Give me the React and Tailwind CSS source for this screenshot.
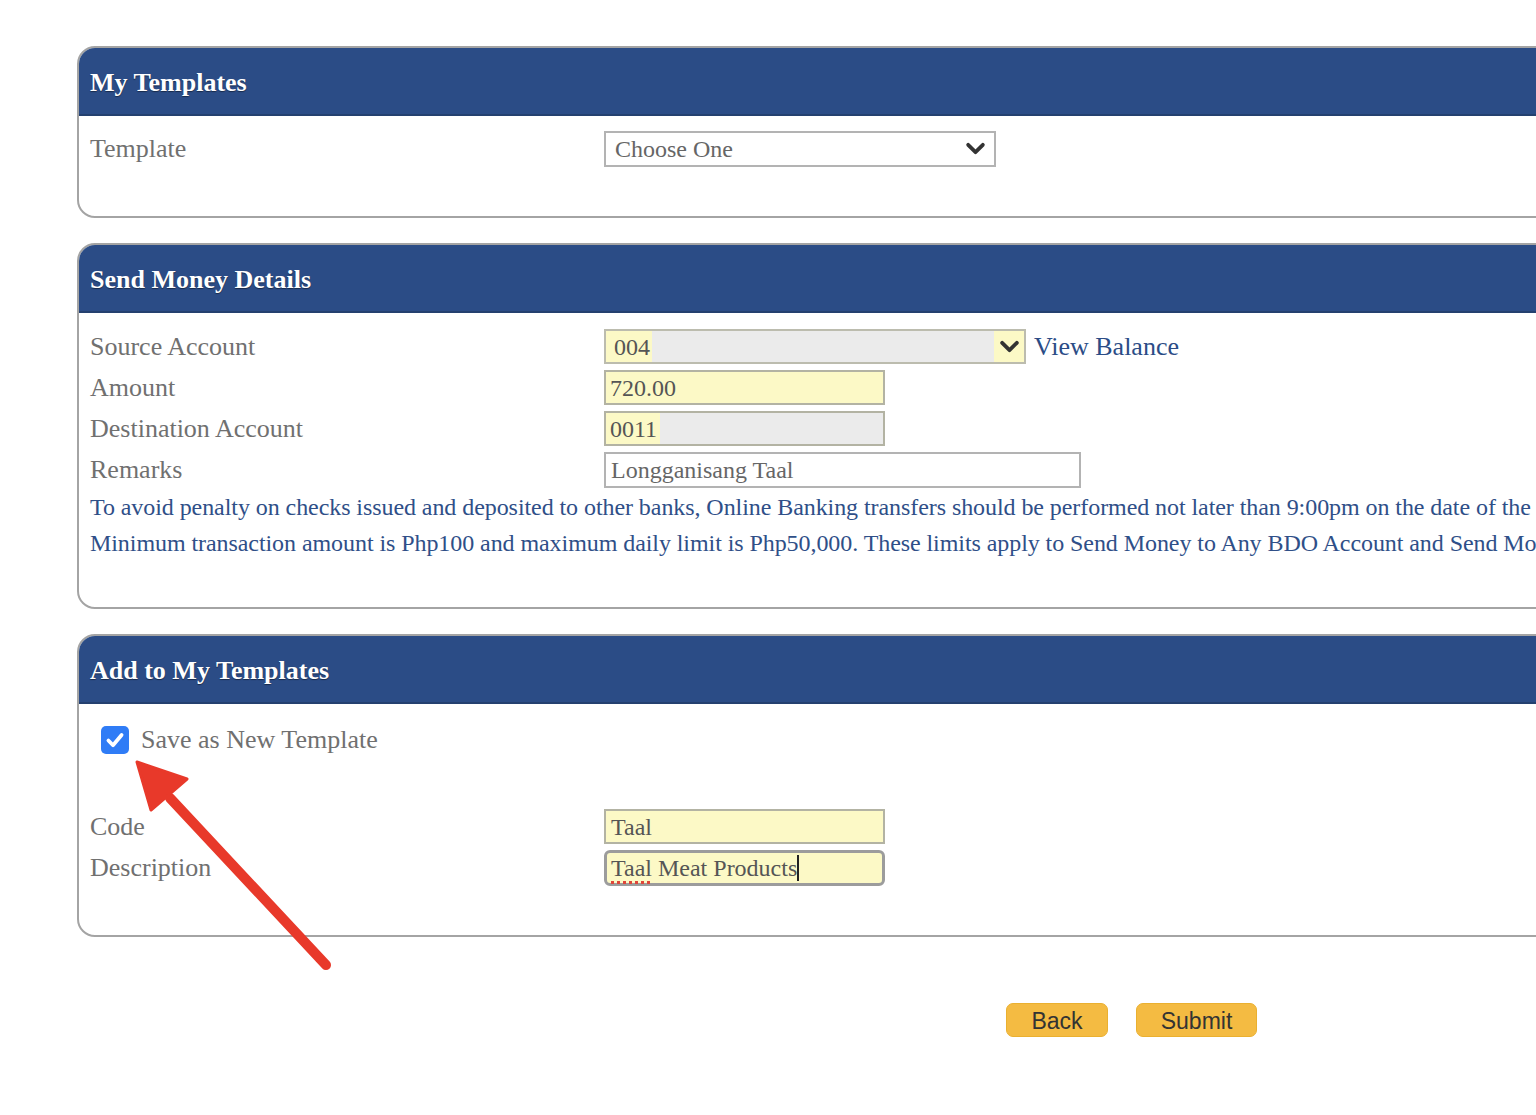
import React from "react";

const serif = { fontFamily: '"Liberation Serif", "Times New Roman", serif' };

function Chevron({ className = "" }) {
  return (
    <svg viewBox="0 0 20 14" className={className} fill="none">
      <path d="M3 3.5 L10 10.5 L17 3.5" stroke="#333" strokeWidth="3.6" strokeLinecap="round" strokeLinejoin="round" />
    </svg>
  );
}

function Panel({ title, children, bodyClass }) {
  return (
    <div className="ml-[77px] w-[1520px] rounded-[18px] border-2 border-[#a4a4a4] overflow-hidden bg-white">
      <div className="h-[68px] bg-[#2b4c86] border-b-2 border-[#24406f] flex items-center pl-[11px] pt-[2px]">
        <span className="text-white font-bold text-[26px] [text-shadow:0_1px_1px_rgba(0,0,0,0.45)]">{title}</span>
      </div>
      <div className={bodyClass}>{children}</div>
    </div>
  );
}

function Row({ label, children, className = "" }) {
  return (
    <div className={"flex items-center h-[35px] " + className}>
      <div className="w-[514px] shrink-0 text-[26px] text-[#707070] leading-none">{label}</div>
      {children}
    </div>
  );
}

export default function App() {
  return (
    <div className="relative w-[1536px] h-[1115px] overflow-hidden bg-white" style={serif}>
      <div className="pt-[46px] flex flex-col gap-[25px]">
        <Panel title="My Templates" bodyClass="pl-[11px] pt-[15px] pb-[50px]">
          <Row label="Template">
            <div className="w-[392px] h-[36px] border-2 border-[#b3b3b3] bg-white flex items-center justify-between pl-[9px] pr-[8px]">
              <span className="text-[24px] text-[#666]">Choose One</span>
              <Chevron className="w-[21px] h-[15px]" />
            </div>
          </Row>
        </Panel>

        <Panel title="Send Money Details" bodyClass="pl-[11px] pt-[16px] pb-[46px]">
          <div className="flex flex-col gap-[6px]">
            <Row label="Source Account">
              <div className="w-[422px] h-[35px] border-2 border-[#bcbcae] bg-[#ebebeb] flex items-stretch">
                <div className="w-[46px] bg-[#fcf9c6] flex items-center pl-[8px]">
                  <span className="text-[24px] text-[#555]">004</span>
                </div>
                <div className="flex-1" />
                <div className="w-[30px] bg-[#fcf9c6] flex items-center justify-center">
                  <Chevron className="w-[21px] h-[15px]" />
                </div>
              </div>
              <span className="ml-[8px] text-[26px] text-[#2b4c86]">View Balance</span>
            </Row>
            <Row label="Amount">
              <div className="w-[281px] h-[35px] border-2 border-[#b3b3a3] bg-[#fcf9c6] flex items-center pl-[4px]">
                <span className="text-[24px] text-[#555]">720.00</span>
              </div>
            </Row>
            <Row label="Destination Account">
              <div className="w-[281px] h-[35px] border-2 border-[#b3b3a3] bg-[#ebebeb] flex items-stretch">
                <div className="w-[54px] bg-[#fcf9c6] flex items-center pl-[4px]">
                  <span className="text-[24px] text-[#555] whitespace-nowrap">0011</span>
                </div>
              </div>
            </Row>
            <Row label="Remarks">
              <div className="w-[477px] h-[36px] border-2 border-[#b3b3b3] bg-white flex items-center pl-[5px]">
                <span className="text-[24px] text-[#666]">Longganisang Taal</span>
              </div>
            </Row>
          </div>
          <div className="mt-[2px] text-[24px] leading-[36px] text-[#2f4f88] whitespace-nowrap tracking-[-0.07px]">
            <div>To avoid penalty on checks issued and deposited to other banks, Online Banking transfers should be performed not later than 9:00pm on the date of the check.</div>
            <div>Minimum transaction amount is Php100 and maximum daily limit is Php50,000. These limits apply to Send Money to Any BDO Account and Send Money to Other Banks.</div>
          </div>
        </Panel>

        <Panel title="Add to My Templates" bodyClass="pl-[11px] pt-[21px] pb-[50px]">
          <div className="flex items-center h-[30px] pl-[11px]">
            <div className="w-[28px] h-[28px] rounded-[5px] bg-[#2f7cf6] flex items-center justify-center">
              <svg viewBox="0 0 20 20" className="w-[22px] h-[22px]" fill="none">
                <path d="M4 10.5 L8.2 14.8 L16 5.5" stroke="white" strokeWidth="3.4" strokeLinecap="round" strokeLinejoin="round" />
              </svg>
            </div>
            <span className="ml-[12px] text-[26px] text-[#707070] leading-none">Save as New Template</span>
          </div>
          <div className="mt-[54px] flex flex-col gap-[6px]">
            <Row label="Code">
              <div className="w-[281px] h-[35px] border-2 border-[#b3b3a3] bg-[#fcf9c6] flex items-center pl-[5px]">
                <span className="text-[24px] text-[#555]">Taal</span>
              </div>
            </Row>
            <Row label="Description">
              <div className="w-[281px] h-[36px] border-[3px] border-[#9c9c9c] rounded-[6px] bg-[#fcf9c6] flex items-center pl-[4px]">
                <span className="text-[24px] text-[#555] whitespace-nowrap">
                  <span className="underline decoration-dotted decoration-[#e0463a] decoration-[3px] underline-offset-[5px]">Taal</span> Meat Products
                </span>
                <span className="w-[2px] h-[26px] bg-[#222]" />
              </div>
            </Row>
          </div>
        </Panel>
      </div>

      <div className="flex gap-[28px] mt-[66px] ml-[1006px]" style={{ fontFamily: '"Liberation Sans", Arial, sans-serif' }}>
        <button className="w-[102px] h-[34px] rounded-[7px] bg-[#f4bb42] border border-[#eab030] text-[23px] text-[#333]">Back</button>
        <button className="w-[121px] h-[34px] rounded-[7px] bg-[#f4bb42] border border-[#eab030] text-[23px] text-[#333]">Submit</button>
      </div>

      <svg className="absolute left-0 top-0 pointer-events-none" width="1536" height="1115" viewBox="0 0 1536 1115">
        <line x1="326" y1="965" x2="170" y2="798" stroke="#e8392a" strokeWidth="10" strokeLinecap="round" />
        <polygon points="137,762 151,810 187,779" fill="#e8392a" stroke="#e8392a" strokeWidth="3" strokeLinejoin="round" />
      </svg>
    </div>
  );
}
